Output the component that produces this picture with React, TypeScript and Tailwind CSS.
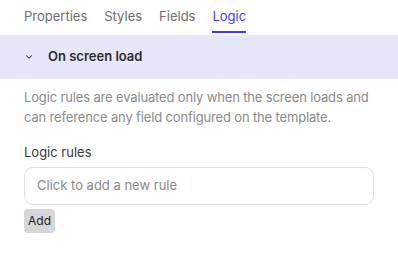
import { ChevronDown } from "lucide-react"

const tabs = ["Properties", "Styles", "Fields", "Logic"]

export default function App() {
  return (
    <div className="w-[398px] h-[254px] bg-white font-['Inter',sans-serif] text-[13px]">
      <div className="flex gap-[17px] px-6 h-[35px]">
        {tabs.map((t) => (
          <div
            key={t}
            className={`relative flex items-center h-[34px] ${t === "Logic" ? "text-[#3d3df5]" : "text-[#6e6e6e]"}`}
          >
            {t}
            {t === "Logic" && <span className="absolute left-0 right-0 bottom-[1px] h-[2px] bg-[#3d3df5]" />}
          </div>
        ))}
      </div>
      <div className="flex items-center h-[44px] bg-[#e6e6fb] pl-[24px] gap-[14px]">
        <ChevronDown className="w-[10px] h-[10px] text-[#333]" strokeWidth={2.5} />
        <span className="font-semibold text-[#2b2b2b]">On screen load</span>
      </div>
      <div className="px-6 pt-[8px]">
        <p className="text-[#8a8a8a] leading-[20px] tracking-[-0.15px] -mr-[4px]">
          Logic rules are evaluated only when the screen loads and can reference any field configured on the template.
        </p>
        <div className="mt-[15px] text-[#3a3a3a] leading-[20px]">Logic rules</div>
        <div className="mt-[5px] h-[38px] rounded-[9px] border border-[#e0e0e0] flex items-center px-[12px] text-[#8a8a8a]">
          Click to add a new rule
        </div>
        <button className="mt-[4px] h-[24px] px-[4px] rounded-[4px] bg-[#d6d6d6] text-[12px] text-[#222]">Add</button>
      </div>
    </div>
  )
}
